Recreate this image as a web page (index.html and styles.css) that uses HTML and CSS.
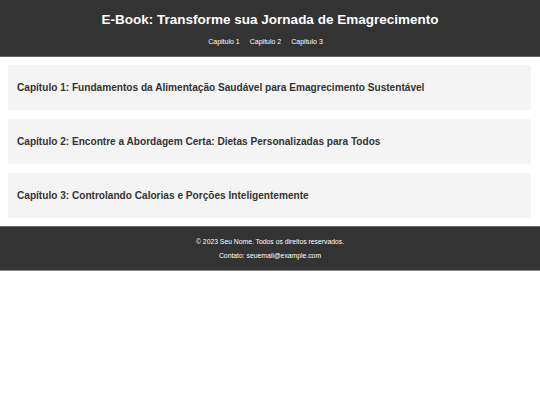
FILE: index.html
```html
<!DOCTYPE html>
<html lang="pt">
<head>
<meta charset="utf-8">
<title>E-Book</title>
<link rel="stylesheet" href="styles.css">
</head>
<body>
<header class="site-header">
  <h1 class="title">E-Book: Transforme sua Jornada de Emagrecimento</h1>
  <nav class="nav">
    <a href="#c1">Capitulo 1</a>
    <a href="#c2">Capitulo 2</a>
    <a href="#c3">Capitulo 3</a>
  </nav>
</header>
<main class="content">
  <section class="chapter" id="c1"><h2>Capítulo 1: Fundamentos da Alimentação Saudável para Emagrecimento Sustentável</h2></section>
  <section class="chapter" id="c2"><h2>Capítulo 2: Encontre a Abordagem Certa: Dietas Personalizadas para Todos</h2></section>
  <section class="chapter" id="c3"><h2>Capítulo 3: Controlando Calorias e Porções Inteligentemente</h2></section>
</main>
<footer class="site-footer">
  <p>© 2023 Seu Nome. Todos os direitos reservados.</p>
  <p>Contato: seuemail@example.com</p>
</footer>
</body>
</html>
```
FILE: styles.css
```css
* { box-sizing: border-box; }
body {
  margin: 0;
  font-family: "Liberation Sans", Arial, sans-serif;
  background: #fff;
  color: #333;
}
.site-header {
  background: #333;
  color: #fff;
  height: 57px;
  padding-top: 12px;
  text-align: center;
  border-bottom: 1px solid #6a6a6a;
}
.title {
  margin: 0;
  font-size: 13.5px;
  line-height: 16px;
  font-weight: bold;
}
.nav {
  margin-top: 9px;
  padding-right: 9px;
  display: flex;
  justify-content: center;
  gap: 10px;
  font-size: 7px;
  line-height: 9px;
}
.nav a { color: #fff; text-decoration: none; }
.content {
  padding: 8px 9px 8px 8px;
  display: flex;
  flex-direction: column;
  gap: 9px;
}
.chapter {
  background: #f4f4f4;
  border-radius: 2px;
  height: 45px;
  padding: 0 9px;
  display: flex;
  align-items: center;
}
.chapter h2 {
  margin: 0;
  font-size: 10.1px;
  font-weight: bold;
  color: #333;
}
.site-footer {
  background: #333;
  color: #fff;
  text-align: center;
  height: 45px;
  padding-top: 10px;
  border-top: 1px solid #6a6a6a;
  border-bottom: 1px solid #888;
  font-size: 6.8px;
  line-height: 9px;
}
.site-footer p { margin: 0 0 5px; }
```
